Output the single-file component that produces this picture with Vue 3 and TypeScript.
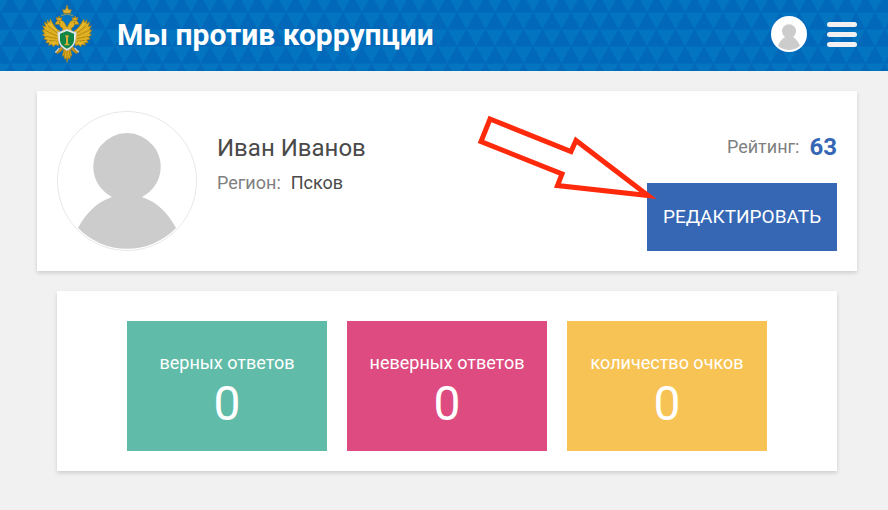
<script setup lang="ts">
interface Stat {
  label: string
  value: number
  tone: 'green' | 'pink' | 'yellow'
}

const user = { name: 'Иван Иванов', region: 'Псков', rating: 63 }

const stats: Stat[] = [
  { label: 'верных ответов', value: 0, tone: 'green' },
  { label: 'неверных ответов', value: 0, tone: 'pink' },
  { label: 'количество очков', value: 0, tone: 'yellow' },
]
</script>

<template>
  <header class="header">
    <svg class="header-pattern" aria-hidden="true">
      <defs>
        <pattern id="triangles" x="1" y="12" width="19" height="34" patternUnits="userSpaceOnUse">
          <rect width="19" height="34" fill="#0268b9" />
          <path d="M0 0H19L9.5 17Z" fill="#0274c0" />
          <path d="M-9.5 17H9.5L0 34ZM9.5 17H28.5L19 34Z" fill="#0274c0" />
          <path d="M0 .5H19M0 17.5H19" stroke="#026dbb" stroke-width="1" />
        </pattern>
      </defs>
      <rect width="100%" height="100%" fill="url(#triangles)" />
    </svg>
    <a class="brand" href="#">
      <svg class="emblem" viewBox="0 0 162 186" aria-hidden="true">
        <g stroke="#a57c16" stroke-width="2" stroke-linejoin="round">
          <path fill="#dfb022" d="M60 84C48 78 40 66 31 48L28 59 21 50 22 63 13 57 17 71 8 68 14 81 6 81 14 92 7 95 17 102 11 108 22 111 17 119 28 119 26 127 37 124 39 131 47 125 56 128Z" />
          <path fill="#dfb022" d="M102 84C114 78 122 66 131 48L134 59 141 50 140 63 149 57 145 71 154 68 148 81 156 81 148 92 155 95 145 102 151 108 140 111 145 119 134 119 136 127 125 124 123 131 115 125 106 128Z" />
          <path fill="#c69119" d="M65 129L55 142 46 144 51 152 60 147 69 139ZM97 129L107 142 116 144 111 152 102 147 93 139Z" />
          <path fill="#d8a91f" d="M73 133L67 160 72 157 74 169 79 164 81 178 85 164 90 169 91 157 96 160 90 133Z" />
          <path fill="#dfb022" d="M66 89L68 76 61 71 58 64 45 64 50 55 62 50 72 57 81 73 90 57 100 50 112 55 117 64 104 64 101 71 94 76 97 89Z" />
          <path fill="#dfb022" d="M51 52L48 43 54 46 57 39 60 46 66 43 63 53ZM99 53L96 43 102 46 105 39 108 46 114 43 111 52Z" />
          <path fill="#e0b331" d="M71 31L68 20 75 21 79 15 79 8 83 8 83 15 87 21 94 20 91 31Z" />
        </g>
        <g fill="none" stroke="#a0750f" stroke-width="2">
          <path d="M53 91L24 69M51 99L15 82M51 107L18 100M53 115L27 112M110 91L138 69M111 99L147 82M111 107L144 100M109 115L135 112M75 142L73 158M81 141V171M88 142L90 158" />
          <path d="M49 83L27 59M48 115L36 124M113 83L135 59M114 115L126 124" stroke="#f4ce45" />
          <path d="M63 38Q81 29 99 38M71 24H91" stroke="#d8ac30" />
        </g>
        <path d="M104 135L117 148M58 135L46 149" stroke="#c8ced4" stroke-width="4" />
        <path d="M55 88L81 78 107 88 110 84 107 112Q105 132 81 143Q57 132 55 112L52 84Z" fill="#e3e9e9" stroke="#9ba7ae" stroke-width="1" />
        <path d="M60 92L81 84 102 92V112Q101 128 81 137Q61 128 60 112Z" fill="#118546" />
        <path d="M76 97H86V102H84V122H88V127H74V122H78V102H76Z" fill="#d6ac32" />
        <circle cx="59" cy="59" r="2" fill="#72520c" />
        <circle cx="103" cy="59" r="2" fill="#72520c" />
      </svg>
      <span class="brand-title">Мы против коррупции</span>
    </a>
    <nav class="header-actions">
      <a class="profile-link" href="#" aria-label="Профиль">
        <svg viewBox="0 0 36 36" aria-hidden="true">
          <circle cx="18" cy="18" r="18" fill="#fff" />
          <path d="M7 30C9 25 11 23 14 21A7 7 0 1 1 22 21C25 23 27 25 29 30Q18 38 7 30Z" fill="#ccc" />
        </svg>
      </a>
      <button class="menu-button" type="button" aria-label="Меню">
        <span></span><span></span><span></span>
      </button>
    </nav>
  </header>

  <main class="content">
    <section class="card profile">
      <svg class="avatar" viewBox="0 0 140 140" aria-hidden="true">
        <circle cx="70" cy="70" r="69.5" fill="#fff" stroke="#e8e8e8" />
        <path d="M21 117C29 102 40 91 55 86A33.7 33.7 0 1 1 85 86C100 91 111 102 119 117A68 68 0 0 1 21 117Z" fill="#ccc" />
      </svg>
      <div class="info">
        <h1 class="name">{{ user.name }}</h1>
        <p class="region"><span class="caption">Регион:</span><span>{{ user.region }}</span></p>
      </div>
      <div class="side">
        <p class="rating"><span class="caption">Рейтинг:</span><strong>{{ user.rating }}</strong></p>
        <button class="edit" type="button">РЕДАКТИРОВАТЬ</button>
      </div>
      <svg class="pointer" viewBox="470 110 190 95" aria-hidden="true">
        <path d="M490 119L571 151.5 576 140.5 648 195.5 557.5 185.5 562 174 481 141.5Z" fill="none" stroke="#ff2a0c" stroke-width="5" stroke-miterlimit="10" />
      </svg>
    </section>

    <section class="card stats">
      <div v-for="stat in stats" :key="stat.label" class="stat" :class="stat.tone">
        <span class="stat-label">{{ stat.label }}</span>
        <span class="stat-value">{{ stat.value }}</span>
      </div>
    </section>
  </main>
</template>

<style>
body {
  margin: 0;
  background: #f1f1f1;
  color: #4a4a4a;
  font-family: Roboto, "Liberation Sans", sans-serif;
  font-size: 18px;
}
</style>

<style scoped>
.header {
  position: relative;
  display: flex;
  align-items: center;
  justify-content: space-between;
  padding: 3px 31px 6px 40px;
  background: #026dbb;
}

.header-pattern {
  position: absolute;
  inset: 0;
  width: 100%;
  height: 100%;
}

.brand,
.header-actions {
  position: relative;
  display: flex;
  align-items: center;
}

.brand {
  gap: 23px;
  color: #fff;
  text-decoration: none;
}

.emblem {
  width: 54px;
  height: 62px;
}

.brand-title {
  padding-top: 2px;
  font-size: 30px;
  line-height: 36px;
  font-weight: 700;
}

.header-actions {
  gap: 20px;
}

.profile-link,
.profile-link svg {
  display: block;
  width: 36px;
  height: 36px;
}

.menu-button {
  display: flex;
  flex-direction: column;
  gap: 5px;
  width: 30px;
  padding: 0;
  border: 0;
  background: none;
  cursor: pointer;
}

.menu-button span {
  height: 5px;
  border-radius: 3px;
  background: #f1f1f1;
}

.content {
  display: flex;
  flex-direction: column;
  gap: 20px;
  padding: 20px 31px 39px 37px;
}

.card {
  background: #fff;
  box-shadow: 0 2px 4px rgba(0, 0, 0, 0.15);
}

.profile {
  position: relative;
  display: flex;
  gap: 20px;
  padding: 20px;
}

.avatar {
  flex: none;
  width: 140px;
  height: 140px;
}

.info {
  flex: 1;
  padding-top: 20px;
}

.name {
  margin: 0;
  font-size: 24px;
  line-height: 34px;
  font-weight: 400;
}

.region,
.rating {
  display: flex;
  gap: 10px;
  margin: 0;
}

.region {
  margin-top: 6px;
  line-height: 24px;
}

.caption {
  color: #808080;
}

.side {
  display: flex;
  flex-direction: column;
  align-items: flex-end;
  justify-content: space-between;
  padding-top: 20px;
}

.rating {
  align-items: center;
  line-height: 32px;
}

.rating strong {
  color: #3567b4;
  font-size: 24px;
}

.edit {
  width: 190px;
  height: 68px;
  padding: 0 0 2px;
  border: 0;
  background: #3567b4;
  color: #fff;
  font: inherit;
  font-size: 19px;
  cursor: pointer;
}

.pointer {
  position: absolute;
  top: 19px;
  right: 197px;
  width: 190px;
  height: 95px;
  pointer-events: none;
}

.stats {
  display: flex;
  justify-content: center;
  gap: 20px;
  margin: 0 20px;
  padding: 30px 20px 20px;
}

.stat {
  box-sizing: border-box;
  display: flex;
  flex-direction: column;
  align-items: center;
  justify-content: center;
  width: 200px;
  height: 130px;
  padding-top: 12px;
  color: #fff;
}

.stat-label {
  line-height: 24px;
}

.stat-value {
  font-size: 48px;
  line-height: 58px;
}

.green {
  background: #60bca8;
}

.pink {
  background: #dd4b80;
}

.yellow {
  background: #f7c355;
}
</style>
